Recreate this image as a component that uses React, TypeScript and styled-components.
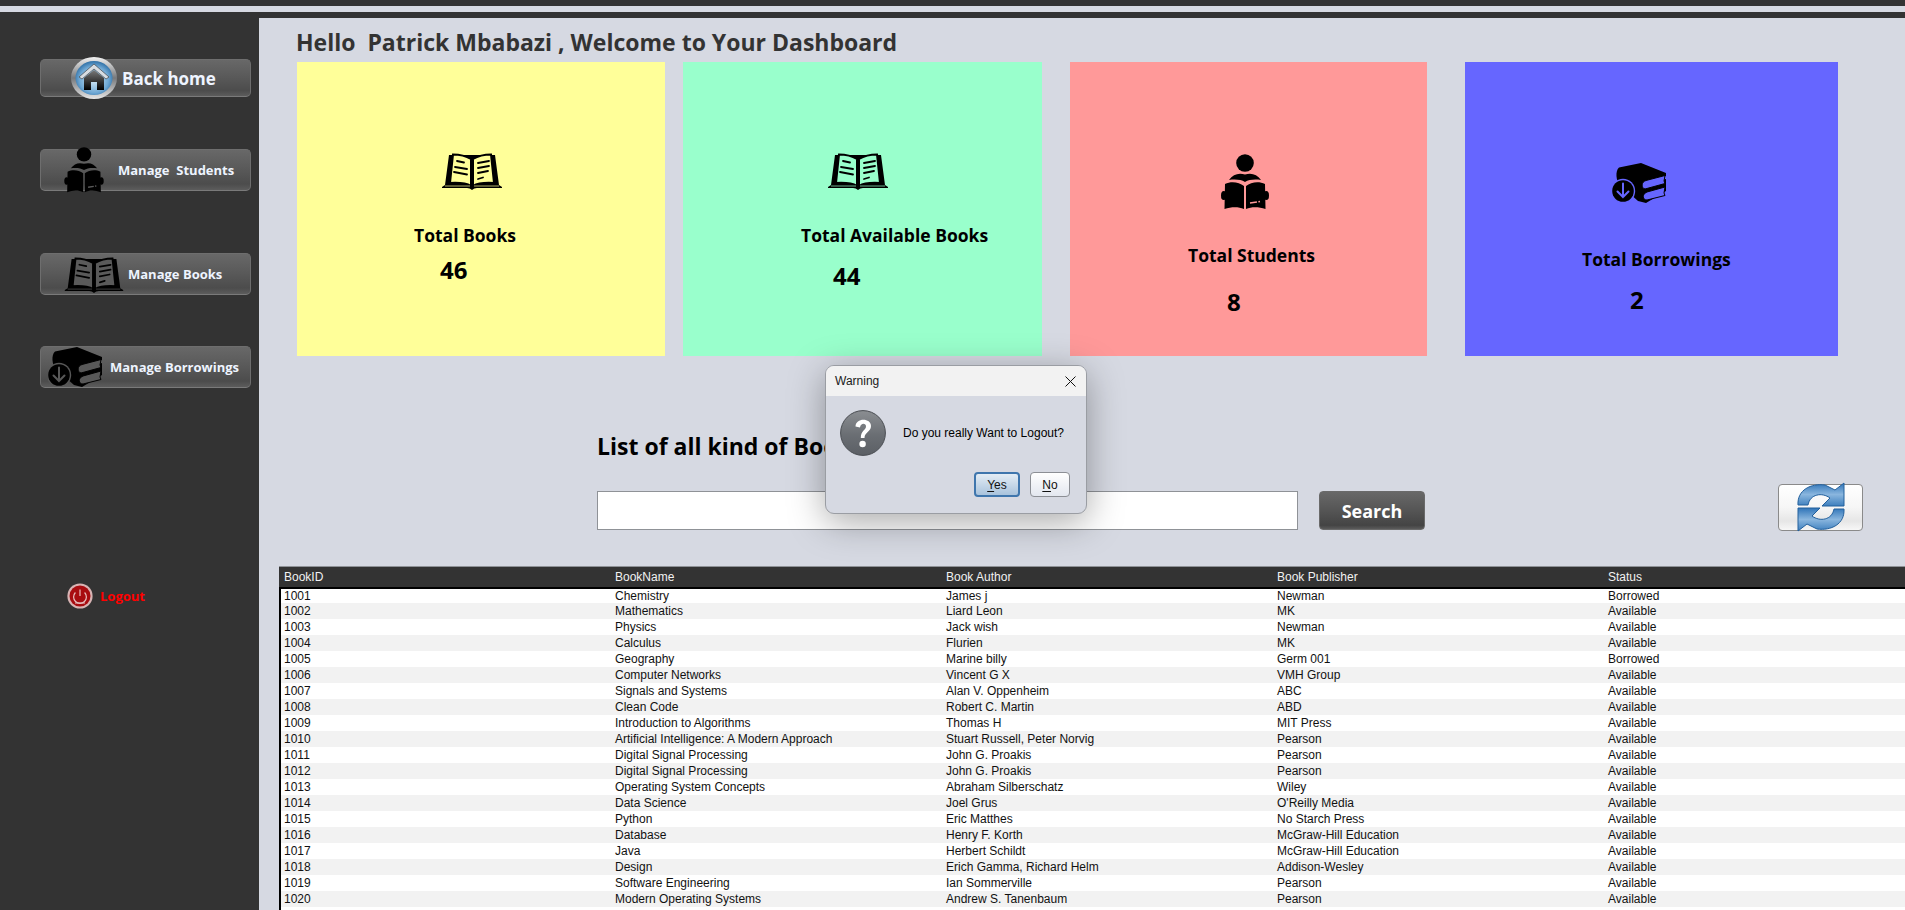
import styled, { createGlobalStyle } from "styled-components";

const GlobalStyle = createGlobalStyle`
  html, body {
    margin: 0;
    padding: 0;
    height: 100%;
    overflow: hidden;
    background: #333333;
  }
  * {
    box-sizing: border-box;
  }
`;

const Page = styled.div`
  position: relative;
  width: 1905px;
  height: 910px;
  overflow: hidden;
  background: #333333;
  font-family: "Liberation Sans", Arial, sans-serif;
`;

const TopStrip = styled.div`
  height: 6px;
  margin-top: 6px;
  background: #d6d9e2;
`;

const Body = styled.div`
  display: flex;
  height: 892px;
  margin-top: 6px;
`;

const Sidebar = styled.aside`
  flex: 0 0 259px;
  padding: 41px 8px 0 40px;
  display: flex;
  flex-direction: column;
`;

const SideButton = styled.div<{ $height: number; $top: number; $pad: number; $gap: number }>`
  display: flex;
  align-items: center;
  height: ${(p) => p.$height}px;
  margin-top: ${(p) => p.$top}px;
  padding-left: ${(p) => p.$pad}px;
  gap: ${(p) => p.$gap}px;
  border-radius: 5px;
  border: 1px solid #6e6e6e;
  border-bottom-color: #7a7a7a;
  background: linear-gradient(#686868, #5a5a5a 45%, #4c4c4c 85%, #5c5c5c);
  color: #eef4ff;
  font-family: "Open Sans", sans-serif;
  font-weight: 700;
  white-space: pre;
`;

const SideLabel = styled.span<{ $size: number }>`
  font-size: ${(p) => p.$size}px;
`;

const LogoutRow = styled.div`
  display: flex;
  align-items: center;
  gap: 7px;
  margin: 195px 0 0 27px;
  color: #ff0000;
  font-family: "Open Sans", sans-serif;
  font-weight: 700;
  font-size: 13px;
`;

const Main = styled.main`
  flex: 1;
  min-width: 0;
  background: #d6d9e2;
  overflow: hidden;
`;

const Title = styled.h1`
  margin: 0 0 0 37px;
  height: 44px;
  padding-top: 9px;
  font-family: "Open Sans", sans-serif;
  font-size: 23px;
  line-height: 30px;
  font-weight: 700;
  color: #333333;
  white-space: pre;
`;

const CardRow = styled.div`
  display: flex;
  margin-left: 38px;
`;

const Card = styled.section<{ $bg: string; $width: number; $gapBefore: number; $padTop: number }>`
  display: flex;
  flex-direction: column;
  align-items: flex-start;
  width: ${(p) => p.$width}px;
  height: 294px;
  margin-left: ${(p) => p.$gapBefore}px;
  padding-top: ${(p) => p.$padTop}px;
  background: ${(p) => p.$bg};
  color: #000000;
  font-family: "Open Sans", sans-serif;
  font-weight: 700;
`;

const CardIcon = styled.div<{ $left: number; $height: number }>`
  display: flex;
  height: ${(p) => p.$height}px;
  margin-left: ${(p) => p.$left}px;
`;

const CardLabel = styled.div<{ $left: number; $top: number }>`
  margin: ${(p) => p.$top}px 0 0 ${(p) => p.$left}px;
  font-size: 17.5px;
  line-height: 24px;
  white-space: nowrap;
`;

const CardValue = styled.div<{ $left: number; $top: number }>`
  margin: ${(p) => p.$top}px 0 0 ${(p) => p.$left}px;
  font-size: 24px;
  line-height: 32px;
`;

const ListHeading = styled.h2`
  margin: 74px 0 0 338px;
  font-family: "Open Sans", sans-serif;
  font-size: 23px;
  line-height: 32px;
  font-weight: 700;
  color: #000000;
`;

const SearchRow = styled.div`
  display: flex;
  align-items: flex-end;
  height: 49px;
  margin: 19px 0 0 338px;
`;

const SearchInput = styled.div`
  width: 701px;
  height: 39px;
  background: #ffffff;
  border: 1px solid #8f9297;
`;

const SearchButton = styled.div`
  display: flex;
  align-items: center;
  justify-content: center;
  width: 106px;
  height: 39px;
  margin-left: 21px;
  border-radius: 4px;
  border: 1px solid #6a6a6a;
  background: linear-gradient(#686868, #555555 50%, #444444 90%, #5a5a5a);
  color: #ffffff;
  font-family: "Open Sans", sans-serif;
  font-size: 18px;
  font-weight: 700;
`;

const RefreshButton = styled.div`
  position: relative;
  width: 85px;
  height: 47px;
  margin-left: 353px;
  margin-bottom: -1px;
  border-radius: 4px;
  border: 1px solid #8a8a8a;
  background: linear-gradient(#ffffff, #f6f6f6 50%, #e6e6e6 80%, #f7f7f7);
`;

const RefreshGlyph = styled.svg`
  position: absolute;
  left: 18px;
  top: -3px;
`;

const BookTable = styled.div`
  margin: 36px 0 0 20px;
  width: 1660px;
  border-left: 2px solid #000000;
`;

const TableRow = styled.div<{ $striped?: boolean }>`
  display: grid;
  grid-template-columns: repeat(5, 331px);
  height: 16px;
  background: ${(p) => (p.$striped ? "#f2f2f2" : "#ffffff")};
  color: #111111;
  font-size: 12px;
  line-height: 16px;
  &:nth-child(2) {
    height: 14px;
    line-height: 14px;
  }
`;

const HeaderRow = styled(TableRow)`
  height: 23px;
  margin-left: -2px;
  padding-left: 2px;
  border-top: 1px solid #8f9297;
  border-bottom: 2px solid #000000;
  background: #333333;
  color: #f2f2f2;
  line-height: 20px;
`;

const Cell = styled.div`
  padding-left: 3px;
  white-space: nowrap;
`;

const Backdrop = styled.div`
  position: absolute;
  left: 825px;
  top: 365px;
  width: 262px;
  height: 149px;
  border-radius: 9px;
  border: 1px solid #9a9da3;
  background: #d6d9e2;
  box-shadow: 0 8px 36px rgba(0, 0, 0, 0.34);
  overflow: hidden;
  color: #000000;
  font-size: 12px;
`;

const DialogTitle = styled.div`
  display: flex;
  align-items: center;
  justify-content: space-between;
  height: 30px;
  padding: 0 10px 0 9px;
  background: #f2f2f2;
  color: #1a1a1a;
`;

const DialogMessage = styled.div`
  display: flex;
  align-items: center;
  gap: 17px;
  margin: 14px 0 0 14px;
`;

const DialogActions = styled.div`
  display: flex;
  justify-content: flex-end;
  gap: 10px;
  margin: 16px 16px 0 0;
`;

const DialogButton = styled.div<{ $width: number; $focused?: boolean }>`
  display: flex;
  align-items: center;
  justify-content: center;
  width: ${(p) => p.$width}px;
  height: 25px;
  border-radius: 4px;
  border: ${(p) => (p.$focused ? "2px solid #3f76ad" : "1px solid #8c8f95")};
  background: ${(p) =>
    p.$focused
      ? "linear-gradient(#e4edf5, #a9c3dc)"
      : "linear-gradient(#ffffff, #e3e7ef)"};
  font-size: 12px;
  color: #111111;
  & u {
    text-underline-offset: 2px;
  }
`;

type PageProps = { page: string };

const OpenBookIcon = ({ page, width, height }: PageProps & { width: number; height: number }) => (
  <svg width={width} height={height} viewBox="0 0 60 38">
    <path
      d="M7 3 L3 33 L0 35 V36 H25 Q28 36 30 38 Q32 36 35 36 H60 V35 L57 33 L53 3 Z"
      fill="#000"
    />
    <path d="M29 7 C24 4 18 2.5 11 2.5 L8 31 C16 30.5 24 31 29 34 Z" fill={page} stroke="#000" strokeWidth="2" />
    <path d="M31 7 C36 4 42 2.5 49 2.5 L52 31 C44 30.5 36 31 31 34 Z" fill={page} stroke="#000" strokeWidth="2" />
    <path d="M3 34 H28 M32 34 H57" stroke={page} strokeWidth="1" opacity="0.7" />
    <g stroke="#000" strokeWidth="1.8" strokeLinecap="round" fill="none">
      <path d="M15 9 L22 10.5" />
      <path d="M13 15 L25 17" />
      <path d="M12 20 L25 22.5" />
      <path d="M36 11 L47 9" />
      <path d="M36 16 L47 14" />
      <path d="M36 21 L46 19" />
      <path d="M36 27 L41 25.5" />
    </g>
  </svg>
);

const ReaderIcon = ({ page, width, height }: PageProps & { width: number; height: number }) => (
  <svg width={width} height={height} viewBox="0 0 48 56">
    <circle cx="24" cy="9" r="8.8" fill="#000" />
    <path d="M8 26 C12 20 18 18.5 24 20.5 C30 18.5 36 20 40 26 C34 25 28 25.5 24 28 C20 25.5 14 25 8 26 Z" fill="#000" />
    <path d="M4 30 C10 27 18 28 23 32 V55 C17 52.5 10 53 3.5 55 Z" fill="#000" />
    <path d="M44 30 C38 27 30 28 25 32 V55 C31 52.5 38 53 44.5 55 Z" fill="#000" />
    <ellipse cx="2.8" cy="41.5" rx="2.8" ry="4.6" fill="#000" />
    <ellipse cx="45.2" cy="41.5" rx="2.8" ry="4.6" fill="#000" />
    <path d="M29 49 L39 47.5" stroke={page} strokeWidth="1.6" strokeDasharray="7 1.5 3" />
  </svg>
);

const BooksDownIcon = ({ page, width, height }: PageProps & { width: number; height: number }) => (
  <svg width={width} height={height} viewBox="0 0 56 40">
    <path d="M7 4.5 L29 0 L54 10 V13 L35 18 V21 L54 16 V28 L34 40 L26 38 L8 22 C4 18 3 8 7 4.5 Z" fill="#000" />
    <path d="M53 12.5 L34 17.5 C29 19 29 25 33 26 L53 20.5 L52 18 Z" fill={page} stroke="#000" strokeWidth="1" />
    <path d="M53 24 L35 29 C30 31 30 37 35 37 L53 32.5 L52 30 Z" fill={page} stroke="#000" strokeWidth="1" />
    <circle cx="11" cy="28" r="12.2" fill={page} />
    <circle cx="11" cy="28" r="10.8" fill="#000" />
    <path d="M11 20.5 V34 M5.5 28.5 L11 34 L16.5 28.5" stroke={page} strokeWidth="2" fill="none" strokeLinecap="round" />
  </svg>
);

const HomeOrb = () => (
  <svg width="46" height="42" viewBox="0 0 46 42" style={{ overflow: "visible" }}>
    <defs>
      <linearGradient id="ringFill" x1="0" y1="0" x2="0" y2="1">
        <stop offset="0" stopColor="#f2f2f2" />
        <stop offset="0.5" stopColor="#77797c" />
        <stop offset="1" stopColor="#e6e6e6" />
      </linearGradient>
      <radialGradient id="glassFill" cx="0.5" cy="0.55" r="0.6">
        <stop offset="0" stopColor="#d8ecf8" />
        <stop offset="0.65" stopColor="#6fa8d4" />
        <stop offset="1" stopColor="#1c5f98" />
      </radialGradient>
      <linearGradient id="houseFill" x1="0" y1="0" x2="0" y2="1">
        <stop offset="0" stopColor="#7a7a7a" />
        <stop offset="1" stopColor="#000" />
      </linearGradient>
    </defs>
    <ellipse cx="23" cy="21" rx="23" ry="21" fill="url(#ringFill)" />
    <ellipse cx="23" cy="21" rx="18.5" ry="17" fill="url(#glassFill)" />
    <path d="M8 20 L23 7 L38 20 L35 22 L23 12 L11 22 Z" fill="#d8dde2" stroke="#333" strokeWidth="0.6" />
    <path d="M13 21 L23 13 L33 21 V33 H26 V25 H20 V33 H13 Z" fill="url(#houseFill)" />
  </svg>
);

const PowerOrb = () => (
  <svg width="26" height="26" viewBox="0 0 26 26">
    <circle cx="13" cy="13" r="12.6" fill="#d8b4b4" />
    <circle cx="13" cy="13" r="10.5" fill="#a80c10" />
    <path d="M8.4 9.5 A6.4 6.4 0 1 0 17.6 9.5" stroke="#e8c0c0" strokeWidth="1.2" fill="none" />
    <path d="M13 6.5 V13" stroke="#e8c0c0" strokeWidth="1.2" />
    <path d="M8 20 H18" stroke="#e8c0c0" strokeWidth="1" />
  </svg>
);

const QuestionOrb = () => (
  <svg width="46" height="46" viewBox="0 0 46 46">
    <defs>
      <linearGradient id="orbFill" x1="0" y1="0" x2="0" y2="1">
        <stop offset="0" stopColor="#8b8e92" />
        <stop offset="0.55" stopColor="#6a6e73" />
        <stop offset="1" stopColor="#5b5f65" />
      </linearGradient>
    </defs>
    <circle cx="23" cy="23" r="22.4" fill="url(#orbFill)" stroke="#4a4d52" strokeWidth="1" />
    <path
      d="M15.5 16.5 C15.5 7.5 31 7.5 31 16 C31 22 24.5 22 24.5 28 H20.8 C20.8 20.5 26 20.5 26 16.3 C26 12.8 20.5 12.8 20 17.5 Z"
      fill="#fff"
    />
    <circle cx="22.6" cy="34" r="3.2" fill="#fff" />
  </svg>
);

const RefreshIcon = () => (
  <RefreshGlyph width="48" height="50" viewBox="0 0 48 50">
    <defs>
      <linearGradient id="arrowFill" x1="0" y1="0" x2="0" y2="1">
        <stop offset="0" stopColor="#2f74b8" />
        <stop offset="0.5" stopColor="#8ab6de" />
        <stop offset="1" stopColor="#3d7fbe" />
      </linearGradient>
    </defs>
    <path
      d="M1 23 C0 8 14 1 28 3 L38 8 L47 1 V24 H25 L33 16 C25 10 13 12 11 23 Z"
      fill="url(#arrowFill)"
      stroke="#23609c"
      strokeWidth="1"
    />
    <path
      d="M47 27 C48 42 34 49 20 47 L10 42 L1 49 V26 H23 L15 34 C23 40 35 38 37 27 Z"
      fill="url(#arrowFill)"
      stroke="#23609c"
      strokeWidth="1"
    />
  </RefreshGlyph>
);

const CloseIcon = () => (
  <svg width="11" height="11" viewBox="0 0 11 11">
    <path d="M0.5 0.5 L10.5 10.5 M10.5 0.5 L0.5 10.5" stroke="#111" strokeWidth="1" />
  </svg>
);

const books = [
  ["1001", "Chemistry", "James j", "Newman", "Borrowed"],
  ["1002", "Mathematics", "Liard Leon", "MK", "Available"],
  ["1003", "Physics", "Jack wish", "Newman", "Available"],
  ["1004", "Calculus", "Flurien", "MK", "Available"],
  ["1005", "Geography", "Marine billy", "Germ 001", "Borrowed"],
  ["1006", "Computer Networks", "Vincent G X", "VMH Group", "Available"],
  ["1007", "Signals and Systems", "Alan V. Oppenheim", "ABC", "Available"],
  ["1008", "Clean Code", "Robert C. Martin", "ABD", "Available"],
  ["1009", "Introduction to Algorithms", "Thomas H", "MIT Press", "Available"],
  ["1010", "Artificial Intelligence: A Modern Approach", "Stuart Russell, Peter Norvig", "Pearson", "Available"],
  ["1011", "Digital Signal Processing", "John G. Proakis", "Pearson", "Available"],
  ["1012", "Digital Signal Processing", "John G. Proakis", "Pearson", "Available"],
  ["1013", "Operating System Concepts", "Abraham Silberschatz", "Wiley", "Available"],
  ["1014", "Data Science", "Joel Grus", "O'Reilly Media", "Available"],
  ["1015", "Python", "Eric Matthes", "No Starch Press", "Available"],
  ["1016", "Database", "Henry F. Korth", "McGraw-Hill Education", "Available"],
  ["1017", "Java", "Herbert Schildt", "McGraw-Hill Education", "Available"],
  ["1018", "Design", "Erich Gamma, Richard Helm", "Addison-Wesley", "Available"],
  ["1019", "Software Engineering", "Ian Sommerville", "Pearson", "Available"],
  ["1020", "Modern Operating Systems", "Andrew S. Tanenbaum", "Pearson", "Available"],
];

const columns = ["BookID", "BookName", "Book Author", "Book Publisher", "Status"];

const App = () => {
  return (
    <Page>
      <GlobalStyle />
      <TopStrip />
      <Body>
        <Sidebar>
          <SideButton $height={38} $top={0} $pad={30} $gap={5}>
            <HomeOrb />
            <SideLabel $size={17}>Back home</SideLabel>
          </SideButton>
          <SideButton $height={42} $top={52} $pad={19} $gap={10}>
            <ReaderIcon page="#5a5a5a" width={48} height={46} />
            <SideLabel $size={13}>Manage  Students</SideLabel>
          </SideButton>
          <SideButton $height={42} $top={62} $pad={23} $gap={4}>
            <OpenBookIcon page="#5a5a5a" width={60} height={37} />
            <SideLabel $size={13}>Manage Books</SideLabel>
          </SideButton>
          <SideButton $height={42} $top={51} $pad={7} $gap={6}>
            <BooksDownIcon page="#585858" width={56} height={40} />
            <SideLabel $size={13}>Manage Borrowings</SideLabel>
          </SideButton>
          <LogoutRow>
            <PowerOrb />
            Logout
          </LogoutRow>
        </Sidebar>
        <Main>
          <Title>Hello  Patrick Mbabazi , Welcome to Your Dashboard</Title>
          <CardRow>
            <Card $bg="#ffff99" $width={368} $gapBefore={0} $padTop={90}>
              <CardIcon $left={145} $height={38}>
                <OpenBookIcon page="#ffff99" width={60} height={38} />
              </CardIcon>
              <CardLabel $left={117} $top={33}>Total Books</CardLabel>
              <CardValue $left={143} $top={7}>46</CardValue>
            </Card>
            <Card $bg="#99ffcc" $width={359} $gapBefore={18} $padTop={90}>
              <CardIcon $left={145} $height={38}>
                <OpenBookIcon page="#99ffcc" width={60} height={38} />
              </CardIcon>
              <CardLabel $left={118} $top={33}>Total Available Books</CardLabel>
              <CardValue $left={150} $top={13}>44</CardValue>
            </Card>
            <Card $bg="#ff9999" $width={357} $gapBefore={28} $padTop={92}>
              <CardIcon $left={151} $height={56}>
                <ReaderIcon page="#ff9999" width={48} height={56} />
              </CardIcon>
              <CardLabel $left={118} $top={33}>Total Students</CardLabel>
              <CardValue $left={157} $top={19}>8</CardValue>
            </Card>
            <Card $bg="#6666ff" $width={373} $gapBefore={38} $padTop={101}>
              <CardIcon $left={147} $height={40}>
                <BooksDownIcon page="#6666ff" width={56} height={40} />
              </CardIcon>
              <CardLabel $left={117} $top={44}>Total Borrowings</CardLabel>
              <CardValue $left={165} $top={13}>2</CardValue>
            </Card>
          </CardRow>
          <ListHeading>List of all kind of Books and Their status</ListHeading>
          <SearchRow>
            <SearchInput />
            <SearchButton>Search</SearchButton>
            <RefreshButton>
              <RefreshIcon />
            </RefreshButton>
          </SearchRow>
          <BookTable>
            <HeaderRow>
              {columns.map((c) => (
                <Cell key={c}>{c}</Cell>
              ))}
            </HeaderRow>
            {books.map((row, i) => (
              <TableRow key={row[0]} $striped={i % 2 === 1}>
                {row.map((value, j) => (
                  <Cell key={j}>{value}</Cell>
                ))}
              </TableRow>
            ))}
            <TableRow />
          </BookTable>
        </Main>
      </Body>
      <Backdrop>
        <DialogTitle>
          Warning
          <CloseIcon />
        </DialogTitle>
        <DialogMessage>
          <QuestionOrb />
          Do you really Want to Logout?
        </DialogMessage>
        <DialogActions>
          <DialogButton $width={46} $focused>
            <span><u>Y</u>es</span>
          </DialogButton>
          <DialogButton $width={40}>
            <span><u>N</u>o</span>
          </DialogButton>
        </DialogActions>
      </Backdrop>
    </Page>
  );
};

export default App;
